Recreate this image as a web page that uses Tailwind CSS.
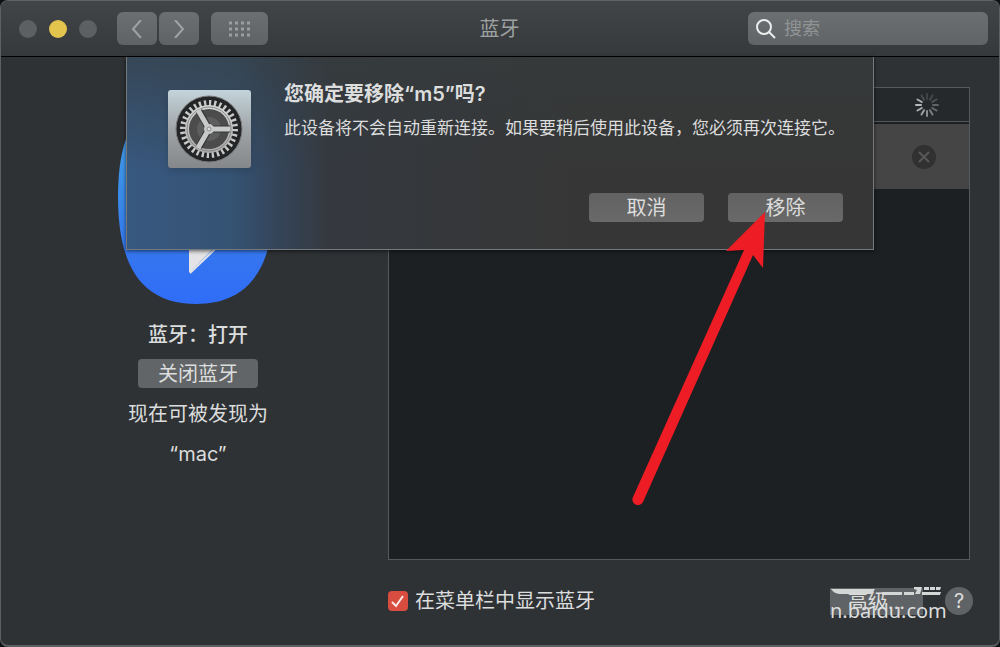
<!DOCTYPE html>
<html lang="zh-CN">

<head>
    <meta charset="UTF-8" />
    <meta name="viewport" content="width=device-width, initial-scale=1.0" />
    <title>蓝牙</title>
    <!-- Tailwind CSS -->
    <script src="https://cdn.jsdelivr.net/npm/@tailwindcss/browser@4"></script>
</head>

<body class="bg-[#0f1114] font-['Inter','Noto_Sans_CJK_SC',sans-serif] text-[#dcdddd]">
    <div class="relative flex min-h-screen flex-col overflow-hidden rounded-lg border border-b-2 border-[#5d6163] bg-[#2e3235]">

        <!-- Title bar -->
        <header class="grid h-14 shrink-0 grid-cols-[1fr_auto_1fr] items-center border-b border-black bg-gradient-to-b from-[#414547] to-[#35393b] pr-[11px] pl-[18px]">
            <div class="flex items-center">
                <div class="flex gap-3">
                    <button aria-label="关闭" class="size-[18px] rounded-full bg-[#5d6062]"></button>
                    <button aria-label="最小化" class="size-[18px] rounded-full bg-[#e3c44d]"></button>
                    <button aria-label="缩放" class="size-[18px] rounded-full bg-[#5d6062]"></button>
                </div>
                <div class="ml-5 flex gap-[2px]">
                    <button aria-label="后退" class="flex h-[33px] w-10 items-center justify-center rounded-md bg-gradient-to-b from-[#6b6f71] to-[#5f6365]">
                        <svg width="12" height="18" viewBox="0 0 12 18" fill="none" stroke="#a0a3a4" stroke-width="2"><path d="M10 0 2 9l8 9" /></svg>
                    </button>
                    <button aria-label="前进" class="flex h-[33px] w-10 items-center justify-center rounded-md bg-gradient-to-b from-[#6b6f71] to-[#5f6365]">
                        <svg width="12" height="18" viewBox="0 0 12 18" fill="none" stroke="#a0a3a4" stroke-width="2"><path d="m2 0 8 9-8 9" /></svg>
                    </button>
                </div>
                <button aria-label="显示全部" class="ml-3 flex h-[33px] w-[57px] items-center justify-center rounded-md bg-gradient-to-b from-[#6b6f71] to-[#5f6365]">
                    <svg width="22" height="16" viewBox="0 0 22 16" stroke="#9b9e9f" stroke-width="3" stroke-dasharray="3 3">
                        <path d="M0 2h22M0 8h22M0 14h22" />
                    </svg>
                </button>
            </div>
            <h1 class="mr-2 text-xl text-[#9fa2a3]">蓝牙</h1>
            <label class="flex h-[33px] w-60 items-center gap-2 justify-self-end rounded-md bg-gradient-to-b from-[#6b6f71] to-[#606466] px-2">
                <svg width="20" height="20" viewBox="0 0 20 20" fill="none" stroke="#eceded" stroke-width="2" class="shrink-0">
                    <circle cx="8" cy="8" r="7" />
                    <path d="m13 13 6 6" />
                </svg>
                <input type="text" placeholder="搜索" aria-label="搜索" class="w-full bg-transparent text-lg outline-none placeholder:text-[#919495]" />
            </label>
        </header>

        <main class="flex flex-1 pt-[30px] pr-[29px] pl-[7px]">
            <!-- Bluetooth status -->
            <section class="flex w-[380px] shrink-0 flex-col items-center">
                <svg width="156" height="214" viewBox="0 0 156 214" class="mt-[3px] mr-1">
                    <defs>
                        <linearGradient id="bt" x1="0" y1="0" x2="0" y2="1">
                            <stop offset="0" stop-color="#4aa9ee" />
                            <stop offset="0.5" stop-color="#3a8be8" />
                            <stop offset="0.8" stop-color="#3474f0" />
                            <stop offset="1" stop-color="#2f6df8" />
                        </linearGradient>
                    </defs>
                    <path d="M78 0c61 0 78 48 78 107s-17 107-78 107S0 166 0 107 17 0 78 0Z" fill="url(#bt)" />
                    <path d="M72 182V31l42 40-80 74M34 69l80 74-42 40" fill="none" stroke="#e4e4e6" stroke-width="2" />
                    <path d="M72 139h43l-43 43Z" fill="#e4e4e6" />
                </svg>
                <p class="mt-[17px] text-xl leading-7 font-medium">蓝牙：打开</p>
                <button class="mt-[10px] h-[29px] w-[120px] rounded-[4px] bg-[#626567] text-xl leading-7">关闭蓝牙</button>
                <p class="mt-3 text-xl leading-7">现在可被发现为</p>
                <p class="mt-3 text-xl leading-7">“mac”</p>
            </section>

            <section class="flex flex-1 flex-col">
                <!-- Device list -->
                <div class="flex-1 border border-[#55595b] bg-[#1c2022]">
                    <div class="flex h-[34px] items-center justify-end border-b border-[#55595b] bg-[#25292c] pr-[30px]">
                        <svg width="24" height="24" viewBox="-12 -12 24 24" stroke="#d0d2d3" stroke-width="2" stroke-linecap="round">
                            <path d="M0-6v-5" opacity=".15" />
                            <path d="M0-6v-5" opacity=".18" transform="rotate(30)" />
                            <path d="M0-6v-5" opacity=".25" transform="rotate(60)" />
                            <path d="M0-6v-5" opacity=".35" transform="rotate(90)" />
                            <path d="M0-6v-5" opacity=".4" transform="rotate(120)" />
                            <path d="M0-6v-5" opacity=".5" transform="rotate(150)" />
                            <path d="M0-6v-5" opacity=".6" transform="rotate(180)" />
                            <path d="M0-6v-5" opacity=".7" transform="rotate(210)" />
                            <path d="M0-6v-5" opacity=".8" transform="rotate(240)" />
                            <path d="M0-6v-5" opacity=".85" transform="rotate(270)" />
                            <path d="M0-6v-5" opacity=".8" transform="rotate(300)" />
                            <path d="M0-6v-5" opacity=".2" transform="rotate(330)" />
                        </svg>
                    </div>
                    <div class="mt-[2px] flex h-[65px] items-center justify-end bg-[#464545] pr-[33px]">
                        <button aria-label="移除设备">
                            <svg width="24" height="24" viewBox="0 0 24 24" class="block">
                                <circle cx="12" cy="12" r="12" fill="#313131" />
                                <path d="m7 7 10 10M17 7 7 17" stroke="#575757" stroke-width="2" />
                            </svg>
                        </button>
                    </div>
                </div>

                <div class="mt-[26px] mb-[29px] flex h-[30px] items-center">
                    <input type="checkbox" id="menubar" checked class="peer sr-only" />
                    <label for="menubar" class="flex items-center gap-[7px] text-xl">
                        <svg width="20" height="20" viewBox="0 0 20 20" fill="none">
                            <rect width="20" height="20" rx="4" fill="#d84d3f" />
                            <path d="m4 11 4 4 7-10" stroke="#fbe9e6" stroke-width="2" />
                        </svg>
                        在菜单栏中显示蓝牙
                    </label>
                    <div class="relative mr-[-3px] ml-auto flex items-center gap-[22px]">
                        <button class="h-[27px] w-[93px] bg-[#606365] text-xl leading-7">高级...</button>
                        <button aria-label="帮助" class="size-7 rounded-full bg-[#606365] text-xl leading-7">?</button>
                        <!-- Watermark -->
                        <svg width="112" height="9" viewBox="0 0 112 9" class="absolute top-0 left-0" fill="#d5d6d6">
                            <path d="M1 2h44l-3 5H12C6 7 3 5 1 2ZM52 5h20v3H52ZM74 5h10v3H74ZM84 0h8l-2 7h-5l2-4-3-1ZM94 0h5v3h-5ZM100 0h5v3h-5ZM106 0h5l-1 3h-4ZM92 5h19l-1 3H92Z" />
                        </svg>
                        <span class="pointer-events-none absolute top-3 left-0 font-['Noto_Sans'] text-xl leading-6">n.baidu.com</span>
                    </div>
                </div>
            </section>
        </main>

        <!-- Confirm sheet -->
        <div role="dialog" aria-labelledby="sheetTitle" class="absolute inset-x-[125px] top-14 flex h-[193px] border border-t-0 border-[#75797b] bg-[linear-gradient(90deg,#37587f_0%,#355373_14%,#34455a_20%,#35393f_27%,#363636_60%)] shadow-[0_1px_4px_rgba(0,0,0,0.6)]">
            <div class="absolute inset-0 bg-gradient-to-b from-[#363c3d]/60 to-transparent to-60%"></div>
            <svg width="83" height="78" viewBox="0 0 83 78" class="relative mt-[33px] ml-[41px] shrink-0 drop-shadow-md">
                <defs>
                    <linearGradient id="plate" x1="0" y1="0" x2="0" y2="1">
                        <stop offset="0" stop-color="#c4d4db" />
                        <stop offset="0.5" stop-color="#a0a5a8" />
                        <stop offset="1" stop-color="#85878a" />
                    </linearGradient>
                    <linearGradient id="steel" x1="0" y1="0" x2="0" y2="1">
                        <stop offset="0" stop-color="#d6d8d8" />
                        <stop offset="1" stop-color="#aaa9a7" />
                    </linearGradient>
                </defs>
                <rect width="83" height="78" rx="3" fill="url(#plate)" />
                <circle cx="41" cy="39" r="33" fill="#242526" />
                <circle cx="41" cy="39" r="33" fill="none" stroke="#77797a" />
                <circle cx="41" cy="39" r="26" fill="none" stroke="#c8c9c9" stroke-width="6" pathLength="64" stroke-dasharray="0.9 1.1" />
                <circle cx="41" cy="39" r="24" fill="url(#steel)" />
                <circle cx="41" cy="39" r="22" fill="none" stroke="#858686" />
                <circle cx="41" cy="39" r="20" fill="#4c4c4c" />
                <circle cx="41" cy="39" r="12" fill="#5e5e5e" />
                <path d="M41 39h21M41 39 31 21M41 39 31 57" stroke="#363636" stroke-width="7" />
                <path d="M41 39h21M41 39 30 20M41 39 30 58" stroke="#c8c9c9" stroke-width="5" />
                <circle cx="41" cy="39" r="5" fill="#c8c9c9" />
                <circle cx="41" cy="39" r="2" fill="#dddede" stroke="#8a8a8a" />
            </svg>
            <div class="relative ml-[33px] flex min-w-0 flex-1 flex-col pt-[23px] pr-[30px] pb-[27px]">
                <h2 id="sheetTitle" class="text-xl leading-7 font-semibold">您确定要移除“m5”吗?</h2>
                <p class="mt-2 text-[17px] leading-6 whitespace-nowrap">此设备将不会自动重新连接。如果要稍后使用此设备，您必须再次连接它。</p>
                <div class="mt-auto flex justify-end gap-6">
                    <button class="h-[29px] w-[115px] rounded-[4px] bg-gradient-to-b from-[#626262] to-[#696969] text-xl leading-7">取消</button>
                    <button class="h-[29px] w-[115px] rounded-[4px] bg-gradient-to-b from-[#626262] to-[#696969] text-xl leading-7">移除</button>
                </div>
            </div>
        </div>

        <!-- Arrow pointing at the remove button -->
        <svg width="140" height="294" viewBox="0 0 140 294" class="pointer-events-none absolute top-[211px] right-[231px]" fill="#ee1c25">
            <path d="m137 0-39 39 18-1L5 285a5 5 0 0 0 10 5L125 43l10 13Z" />
        </svg>
    </div>
</body>

</html>
